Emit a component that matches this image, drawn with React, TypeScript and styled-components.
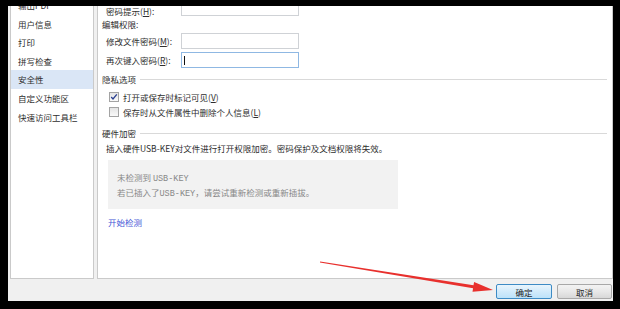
import styled, { createGlobalStyle } from "styled-components";

const GlobalStyle = createGlobalStyle`
  html, body {
    margin: 0;
    padding: 0;
    background: #000;
  }
  body {
    width: 620px;
    height: 309px;
    overflow: hidden;
    font-family: "Noto Sans CJK SC", "Liberation Sans", sans-serif;
    color: #2e2e2e;
  }
`;

const Screen = styled.div`
  position: relative;
  box-sizing: border-box;
  width: 620px;
  height: 309px;
  padding: 6px 7px 8px 8px;
  background: #000;
`;

const Dialog = styled.div`
  display: flex;
  flex-direction: column;
  height: 100%;
  padding-left: 2px;
  background: #f0f0f0;
`;

const Panels = styled.div`
  display: flex;
  gap: 3px;
  flex: 1;
  min-height: 0;
`;

const NavPanel = styled.div`
  width: 82px;
  background: #fff;
  border: 1px solid #cacaca;
  border-top: none;
  overflow: hidden;
`;

const NavList = styled.ul`
  list-style: none;
  margin: -10px 0 0;
  padding: 0;
`;

const NavItem = styled.li<{ $active?: boolean }>`
  height: 18.6px;
  line-height: 18.6px;
  padding-left: 7px;
  font-size: 8.5px;
  white-space: nowrap;
  background: ${(p) => (p.$active ? "#dae6f6" : "transparent")};
`;

const ContentPanel = styled.div`
  flex: 1;
  background: #fff;
  border: 1px solid #cacaca;
  border-top: none;
  overflow: hidden;
  padding: 0 5px 0 4px;
`;

const Content = styled.div`
  display: flex;
  flex-direction: column;
  margin-top: -6px;
  font-size: 8.5px;
`;

const FieldRow = styled.div<{ $gap?: number }>`
  display: flex;
  align-items: center;
  height: 16px;
  margin-top: ${(p) => p.$gap ?? 0}px;
  padding-left: 4px;
`;

const FieldLabel = styled.span<{ $drop?: number }>`
  width: 75px;
  margin-top: ${(p) => p.$drop ?? 0}px;
  white-space: nowrap;
`;

const TextBox = styled.div<{ $focused?: boolean }>`
  position: relative;
  box-sizing: border-box;
  width: 118px;
  height: 16px;
  background: #fff;
  border: 1px solid ${(p) => (p.$focused ? "#8fb8e3" : "#cfd2d6")};
`;

const Caret = styled.span`
  position: absolute;
  left: 2px;
  top: 3px;
  width: 1px;
  height: 9px;
  background: #111;
`;

const GroupLabel = styled.div<{ $gap?: number }>`
  display: flex;
  align-items: center;
  height: 16px;
  margin-top: ${(p) => p.$gap ?? 0}px;
  white-space: nowrap;
`;

const SectionHeader = styled(GroupLabel)`
  gap: 4px;
  &::after {
    content: "";
    flex: 1;
    height: 1px;
    background: #d9d9d9;
  }
`;

const CheckRow = styled.label<{ $gap?: number }>`
  display: flex;
  align-items: center;
  gap: 4px;
  height: 15px;
  margin-top: ${(p) => p.$gap ?? 0}px;
  padding-left: 7px;
  white-space: nowrap;
`;

const CheckBox = styled.span`
  display: flex;
  align-items: center;
  justify-content: center;
  box-sizing: border-box;
  width: 10px;
  height: 10px;
  border: 1px solid #a3a3a3;
  background: linear-gradient(#e4e4e4, #fafafa);
`;

const Note = styled.div<{ $gap?: number }>`
  height: 14px;
  line-height: 14px;
  margin-top: ${(p) => p.$gap ?? 0}px;
  padding-left: 4px;
  white-space: nowrap;
`;

const InfoBox = styled.div`
  box-sizing: border-box;
  width: 290px;
  height: 49px;
  margin: 5px 0 0 6px;
  padding: 11px 0 0 9px;
  background: #f2f2f2;
  color: #888;
  line-height: 13px;
  white-space: nowrap;
`;

const Mono = styled.span`
  font-family: "Liberation Mono", monospace;
  font-size: 8.5px;
`;

const LinkText = styled.a`
  display: block;
  height: 14px;
  line-height: 14px;
  margin: 6px 0 0 6px;
  color: #3f55d6;
  text-decoration: none;
`;

const Footer = styled.div`
  display: flex;
  justify-content: flex-end;
  gap: 5px;
  height: 22px;
  box-sizing: border-box;
  padding: 5px 1px 0 0;
`;

const Button = styled.button<{ $primary?: boolean }>`
  box-sizing: border-box;
  width: ${(p) => (p.$primary ? 56 : 55)}px;
  height: 15px;
  padding: 0;
  font-family: inherit;
  font-size: 8.5px;
  color: #222;
  border-radius: 2px;
  border: 1px solid ${(p) => (p.$primary ? "#3d8bc5" : "#a8a8a8")};
  background: ${(p) =>
    p.$primary
      ? "linear-gradient(#e9f5fd, #d2ebfb 50%, #bde2f9)"
      : "linear-gradient(#f3f3f3, #e8e8e8 50%, #d8d8d8)"};
`;

const ArrowLayer = styled.svg`
  position: absolute;
  left: 0;
  top: 0;
  pointer-events: none;
`;

const navItems = ["输出PDF", "用户信息", "打印", "拼写检查", "安全性", "自定义功能区", "快速访问工具栏"];

export default function App() {
  return (
    <Screen>
      <GlobalStyle />
      <Dialog>
        <Panels>
          <NavPanel>
            <NavList>
              {navItems.map((item) => (
                <NavItem key={item} $active={item === "安全性"}>
                  {item}
                </NavItem>
              ))}
            </NavList>
          </NavPanel>

          <ContentPanel>
            <Content>
              <FieldRow>
                <FieldLabel $drop={6}>
                  密码提示(<u>H</u>):
                </FieldLabel>
                <TextBox />
              </FieldRow>
              <GroupLabel>编辑权限:</GroupLabel>
              <FieldRow $gap={1}>
                <FieldLabel>
                  修改文件密码(<u>M</u>):
                </FieldLabel>
                <TextBox />
              </FieldRow>
              <FieldRow $gap={3}>
                <FieldLabel>
                  再次键入密码(<u>R</u>):
                </FieldLabel>
                <TextBox $focused>
                  <Caret />
                </TextBox>
              </FieldRow>

              <SectionHeader $gap={3}>隐私选项</SectionHeader>
              <CheckRow $gap={2}>
                <CheckBox>
                  <svg width="8" height="8" viewBox="0 0 8 8">
                    <path d="M1.2 4 L3 6 L6.8 1.4" fill="none" stroke="#2a3f8f" strokeWidth="1.3" />
                  </svg>
                </CheckBox>
                <span>
                  打开或保存时标记可见(<u>V</u>)
                </span>
              </CheckRow>
              <CheckRow>
                <CheckBox />
                <span>
                  保存时从文件属性中删除个人信息(<u>L</u>)
                </span>
              </CheckRow>

              <SectionHeader $gap={6}>硬件加密</SectionHeader>
              <Note>插入硬件USB-KEY对文件进行打开权限加密。密码保护及文档权限将失效。</Note>
              <InfoBox>
                <div>
                  未检测到 <Mono>USB-KEY</Mono>
                </div>
                <div>
                  若已插入了<Mono>USB-KEY</Mono>，请尝试重新检测或重新插拔。
                </div>
              </InfoBox>
              <LinkText href="#">开始检测</LinkText>
            </Content>
          </ContentPanel>
        </Panels>

        <Footer>
          <Button $primary>确定</Button>
          <Button>取消</Button>
        </Footer>
      </Dialog>

      <ArrowLayer width="620" height="309" viewBox="0 0 620 309">
        <polygon
          points="320.1,261.5 473.5,285.3 474.1,281.9 493,290 472.5,291.7 473.1,288.3 319.9,262.5"
          fill="#e8302d"
        />
      </ArrowLayer>
    </Screen>
  );
}
